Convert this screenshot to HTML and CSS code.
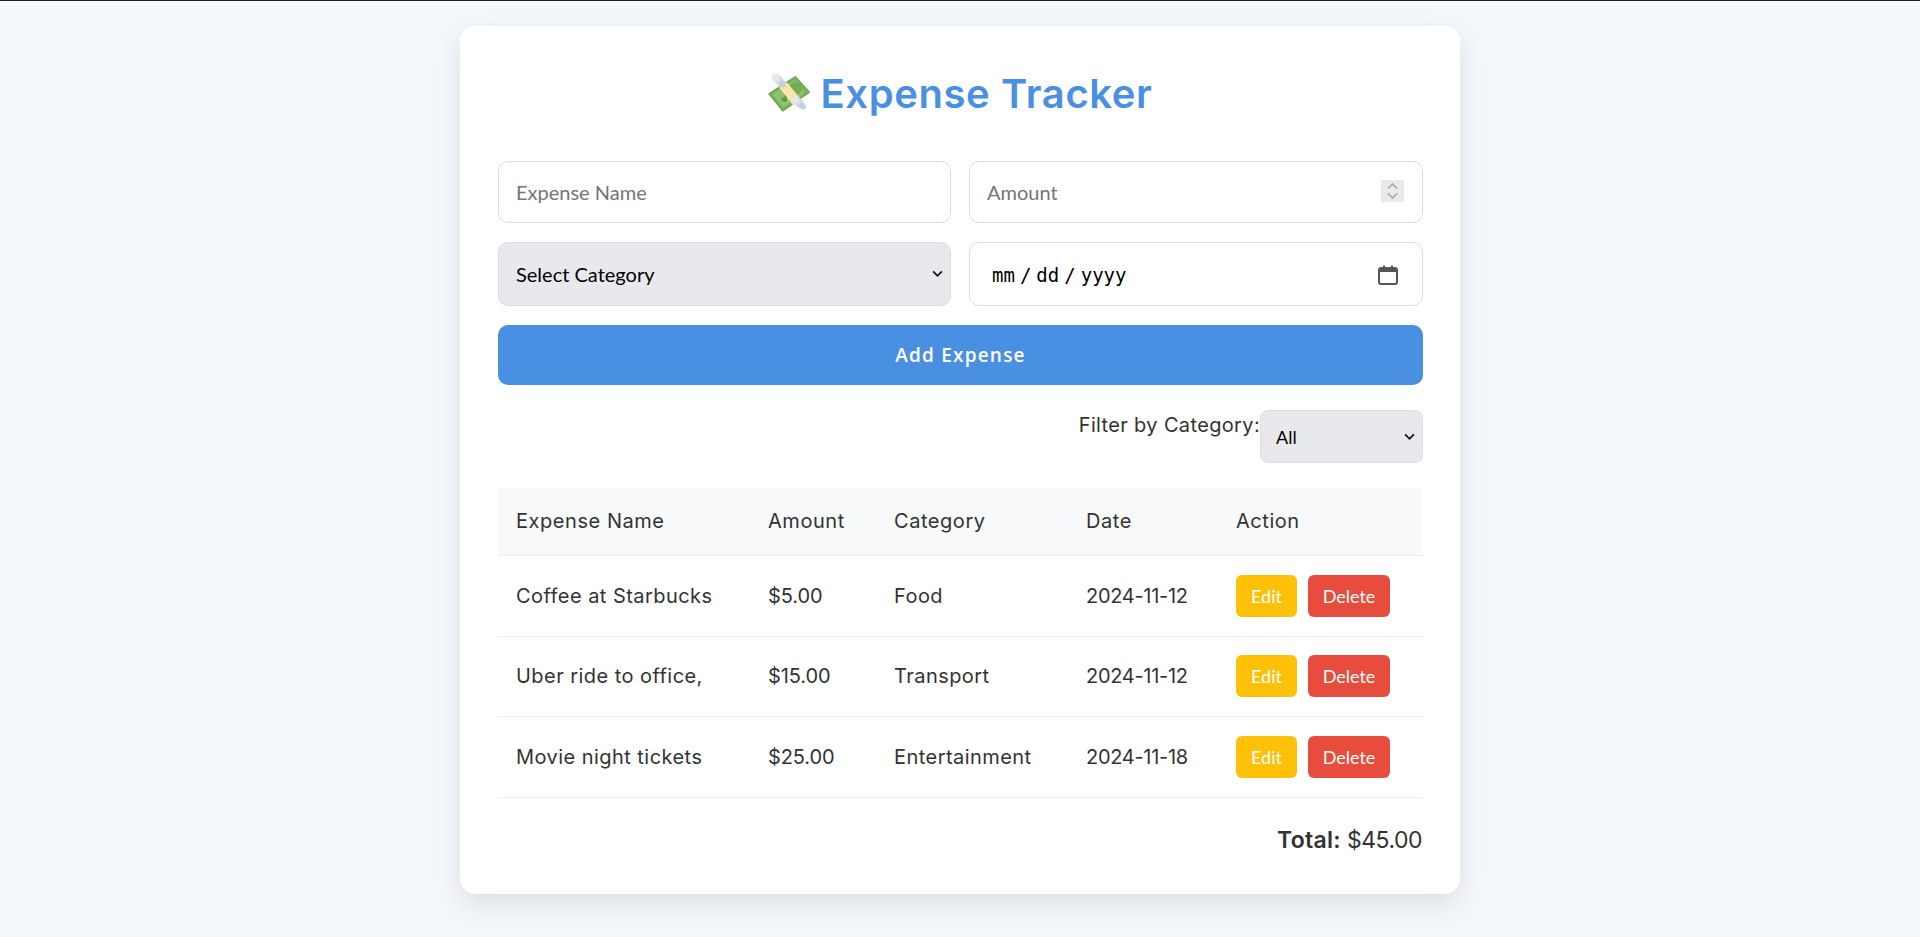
FILE: index.html
```html
<!DOCTYPE html>
<html lang="en">
<head>
<meta charset="utf-8">
<title>Expense Tracker</title>
<link rel="stylesheet" href="styles.css">
</head>
<body>
<main class="card">
  <h1 class="title">
    <svg class="money" viewBox="85 65 130 125" role="img" aria-label="Money with wings">
      <polygon points="88,130 168,78 210,125 130,182" fill="#79b35c" stroke="#6ba552" stroke-width="4" stroke-linejoin="round"/>
      <polygon points="99,131 165,88 198,125 131,171" fill="#8cc46d"/>
      <circle cx="168" cy="114" r="19" fill="#6fae53"/>
      <text class="money-sign" x="0" y="0" transform="translate(128 150) rotate(52)" text-anchor="middle">$</text>
      <polygon points="118,110 142,95 184,146 160,164" fill="#ffe2ac"/>
      <ellipse cx="118" cy="90" rx="24" ry="13" transform="rotate(42 118 90)" fill="#d3dbe3"/>
      <ellipse cx="108" cy="82" rx="13" ry="10" transform="rotate(42 108 82)" fill="#e3e8ee"/>
      <ellipse cx="128" cy="101" rx="11" ry="8" transform="rotate(42 128 101)" fill="#c6d0da"/>
      <ellipse cx="178" cy="157" rx="24" ry="13" transform="rotate(42 178 157)" fill="#d3dbe3"/>
      <ellipse cx="168" cy="148" rx="12" ry="9" transform="rotate(42 168 148)" fill="#e3e8ee"/>
      <ellipse cx="190" cy="168" rx="11" ry="8" transform="rotate(42 190 168)" fill="#c6d0da"/>
    </svg>
    <span>Expense Tracker</span>
  </h1>
  <form class="form">
    <input class="field" type="text" placeholder="Expense Name">
    <input class="field field-number" type="number" placeholder="Amount">
    <select class="field field-select">
      <option>Select Category</option>
    </select>
    <input class="field field-date" type="date">
    <button class="submit" type="button">Add Expense</button>
  </form>
  <div class="filter">
    <label class="filter-label">Filter by Category:</label>
    <select class="filter-select"><option>All</option></select>
  </div>
  <table class="table">
    <colgroup>
      <col class="c1"><col class="c2"><col class="c3"><col class="c4"><col class="c5">
    </colgroup>
    <thead>
      <tr><th>Expense Name</th><th>Amount</th><th>Category</th><th>Date</th><th>Action</th></tr>
    </thead>
    <tbody>
      <tr><td>Coffee at Starbucks</td><td class="num">$5.00</td><td>Food</td><td class="date">2024-11-12</td>
        <td><button class="btn edit" type="button">Edit</button><button class="btn delete" type="button">Delete</button></td></tr>
      <tr><td>Uber ride to office,</td><td class="num">$15.00</td><td>Transport</td><td class="date">2024-11-12</td>
        <td><button class="btn edit" type="button">Edit</button><button class="btn delete" type="button">Delete</button></td></tr>
      <tr><td>Movie night tickets</td><td class="num">$25.00</td><td>Entertainment</td><td class="date">2024-11-18</td>
        <td><button class="btn edit" type="button">Edit</button><button class="btn delete" type="button">Delete</button></td></tr>
    </tbody>
  </table>
  <p class="total"><strong>Total:</strong> $45.00</p>
</main>
</body>
</html>
```
FILE: styles.css
```css
* { box-sizing: border-box; }
html, body { margin: 0; }
body {
  background: #f4f7fb;
  border-top: 1px solid #1e2328;
  min-height: 937px;
  font-family: Inter, "Open Sans", sans-serif;
  color: #333;
  overflow: hidden;
}
.card {
  width: 1000px;
  height: 868px;
  margin: 25px auto 0;
  padding: 38px 37px 0 38px;
  background: #fff;
  border-radius: 15px;
  box-shadow: 0 10px 30px rgba(0, 0, 0, 0.1);
}
.title {
  display: flex;
  justify-content: center;
  align-items: center;
  gap: 9px;
  margin: 0 0 37px;
  height: 60px;
  padding-bottom: 2px;
  font-size: 40px;
  font-weight: 600;
  letter-spacing: 0.6px;
  color: #4a90e2;
}
.money { width: 43px; height: 42px; }
.money-sign { font-family: "Open Sans", sans-serif; font-size: 34px; font-weight: 700; fill: #4b8f38; letter-spacing: 0; }
.form {
  display: grid;
  grid-template-columns: 453px 454px;
  column-gap: 18px;
  row-gap: 19px;
}
.field {
  width: 100%;
  height: 62px;
  padding: 0 18px 0 17px;
  border: 1px solid #ddd;
  border-radius: 10px;
  background: #fff;
  font-family: Lato, sans-serif;
  font-size: 20px;
  color: #000;
}
.field::placeholder { color: #757575; }
.field-number::-webkit-inner-spin-button {
  -webkit-appearance: none;
  appearance: none;
  width: 23px;
  height: 22px;
  margin: 0;
  opacity: 1;
  background: #e9e9ed url("data:image/svg+xml,%3Csvg xmlns='http://www.w3.org/2000/svg' viewBox='0 0 23 22'%3E%3Cpath d='M7 8.500l4.500-4.500 4.500 4.500M7 13.500l4.500 4.500 4.500-4.500' fill='none' stroke='%23a3a3ad' stroke-width='1.5'/%3E%3C/svg%3E") center / 23px 22px no-repeat;
}
.field-select, .field-date { height: 64px; }
.field-select, .filter-select {
  -webkit-appearance: none;
  appearance: none;
  background: #e9e9ed url("data:image/svg+xml,%3Csvg xmlns='http://www.w3.org/2000/svg' viewBox='0 0 10 7'%3E%3Cpath d='M1 1.200l4 4 4-4' fill='none' stroke='%23111' stroke-width='1.6'/%3E%3C/svg%3E") no-repeat right 7px center / 11px 8px;
}
.field-select { font-size: 20px; font-weight: 400; }
.field-date {
  padding: 1px 23px 0 21px;
  font-family: "DejaVu Sans Mono", monospace;
  font-size: 19px;
}
.field-date::-webkit-datetime-edit-text { padding: 0 4px; }
.field-date::-webkit-calendar-picker-indicator {
  width: 22px;
  height: 22px;
  margin: 0;
  padding: 0;
  background: url("data:image/svg+xml,%3Csvg xmlns='http://www.w3.org/2000/svg' viewBox='0 0 22 22'%3E%3Crect x='2' y='4' width='18' height='16' rx='2' fill='none' stroke='%23555' stroke-width='2'/%3E%3Cpath d='M2 5h18v3H2zM6 1.500h2v3H6zM14 1.500h2v3h-2z' fill='%23555'/%3E%3C/svg%3E") center / 22px 22px no-repeat;
}
.submit {
  grid-column: 1 / -1;
  height: 60px;
  border: 0;
  border-radius: 10px;
  background: #4a90e2;
  color: #fff;
  font-family: "Open Sans", sans-serif;
  font-size: 19px;
  font-weight: 600;
  letter-spacing: 1.2px;
}
.filter {
  display: flex;
  justify-content: flex-end;
  align-items: flex-start;
  margin-top: 25px;
}
.filter-label { margin-top: 3px; font-size: 20px; letter-spacing: 0.35px; }
.filter-select {
  width: 163px;
  height: 53px;
  padding: 0 10px 0 15px;
  border: 1px solid #ddd;
  border-radius: 8px;
  font-family: Lato, sans-serif;
  font-size: 18px;
  color: #000;
}
.table {
  width: 925px;
  margin-top: 25px;
  border-collapse: collapse;
  table-layout: fixed;
  font-size: 20px;
  letter-spacing: 0.45px;
}
.c1 { width: 252px; } .c2 { width: 126px; } .c3 { width: 192px; } .c4 { width: 150px; } .c5 { width: 205px; }
th, td { padding: 0 18px; text-align: left; font-weight: 400; border-bottom: 1px solid #eee; }
th { height: 67px; background: #f8f9fa; letter-spacing: 0.55px; }
td { height: 81px; }
tr:nth-child(2) td { height: 80px; }
td.num { letter-spacing: -0.1px; }
td.date { letter-spacing: -0.3px; }
.btn {
  height: 42px;
  border: 0;
  border-radius: 6px;
  color: #fff;
  font-family: Lato, sans-serif;
  font-size: 18px;
  letter-spacing: 0;
}
.edit { width: 61px; margin-right: 11px; background: #ffc107; }
.delete { width: 82px; background: #e74c3c; }
.total {
  margin: 28px 1px 0 0;
  text-align: right;
  font-size: 23px;
  letter-spacing: -0.5px;
}
.total strong { font-weight: 600; letter-spacing: 0.3px; }
```
